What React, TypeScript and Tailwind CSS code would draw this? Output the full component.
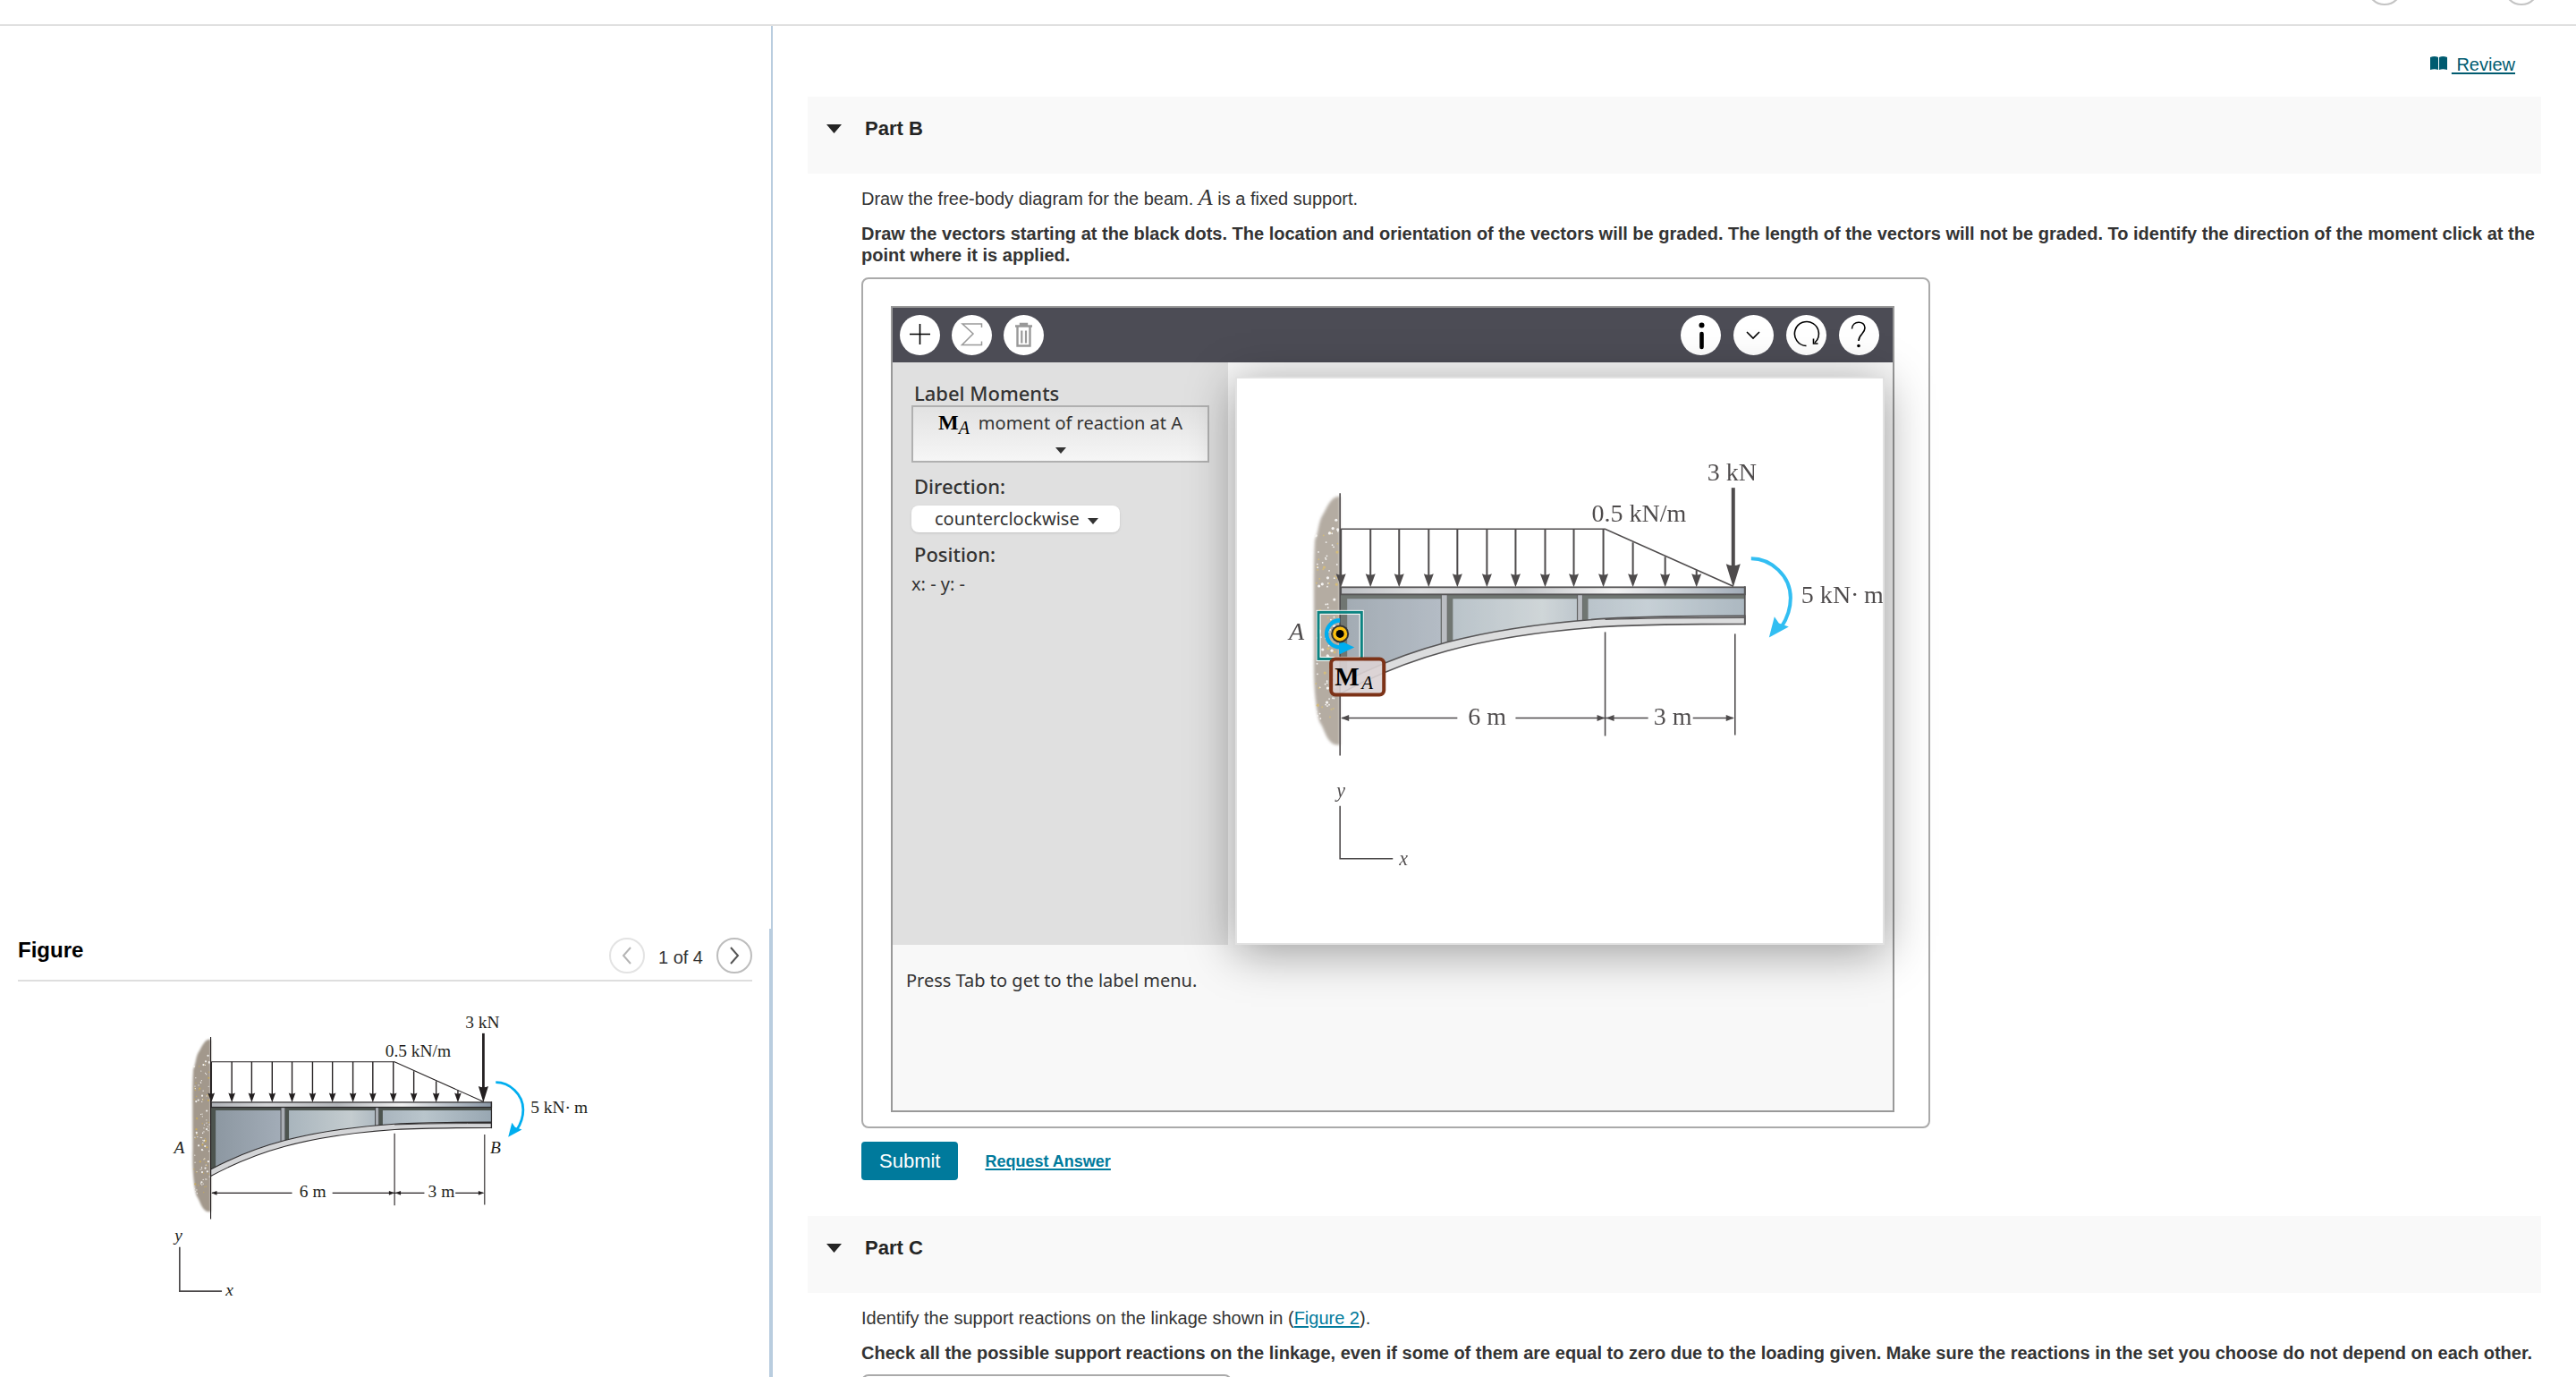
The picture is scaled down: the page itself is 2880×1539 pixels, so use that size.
import React, { useId } from "react";

const loadArrows = [1, 34, 66, 99, 131, 164, 196, 229, 261, 294].map((x) => ({ x, top: 40 }));
const taperArrows = [
  { x: 327, top: 55 },
  { x: 363, top: 71 },
  { x: 398, top: 86 },
];

const specks = Array.from({ length: 120 }, (_, i) => {
  const a = Math.abs(Math.sin(i * 12.9898) * 43758.5453) % 1;
  const b = Math.abs(Math.sin(i * 78.233 + 3) * 12543.123) % 1;
  return { x: -27 + a * 25, y: 28 + b * 226, r: i % 4 === 0 ? 1.6 : 0.9, yellow: i % 3 === 1 };
});

function Arrow({ x, top }: { x: number; top: number }) {
  return (
    <g>
      <line x1={x} y1={top} x2={x} y2={94} stroke="#231f20" strokeWidth="2" />
      <path d={`M${x - 5.5} 90 Q${x} 92.5 ${x + 5.5} 90 L${x} 105 Z`} fill="#231f20" />
    </g>
  );
}

function DimHead({ x, dir }: { x: number; dir: 1 | -1 }) {
  return <path d={`M${x} 251 l${-9 * dir} -3.5 v7 Z`} fill="#231f20" />;
}

function BeamDrawing() {
  const id = useId();
  const web = `${id}web`;
  const flange = `${id}flange`;
  const soft = `${id}soft`;
  return (
    <g>
      <defs>
        <linearGradient id={web} x1="0" y1="0" x2="452" y2="0" gradientUnits="userSpaceOnUse">
          <stop offset="0" stopColor="#8b96a0" />
          <stop offset="0.26" stopColor="#a3adb8" />
          <stop offset="0.28" stopColor="#a9b5bd" />
          <stop offset="0.5" stopColor="#c4cccf" />
          <stop offset="0.61" stopColor="#a9b5be" />
          <stop offset="0.76" stopColor="#b9c5cc" />
          <stop offset="1" stopColor="#98a7b2" />
        </linearGradient>
        <linearGradient id={flange} x1="0" y1="0" x2="452" y2="0" gradientUnits="userSpaceOnUse">
          <stop offset="0" stopColor="#b0b3b8" />
          <stop offset="0.2" stopColor="#d3d4d6" />
          <stop offset="0.45" stopColor="#b4b7bb" />
          <stop offset="0.68" stopColor="#f0f0f0" />
          <stop offset="1" stopColor="#8a97a6" />
        </linearGradient>
        <filter id={soft} x="-20%" y="-5%" width="140%" height="110%">
          <feGaussianBlur stdDeviation="1.6" />
        </filter>
      </defs>

      <path
        d="M0 4 C-8 2 -13 12 -18 22 C-25 32 -23 42 -28 52 C-30 80 -29 130 -29 180 C-30 215 -27 240 -23 255 C-18 262 -17 270 -12 276 C-7 282 -4 281 0 281 Z"
        fill="#a2988c"
        filter={`url(#${soft})`}
      />
      {specks.map((s, i) => (
        <circle key={i} cx={s.x} cy={s.y} r={s.r} fill={s.yellow ? "#c9ab5c" : "#f4f2ef"} />
      ))}

      <path d="M0 112 H452 V137 C400 137 350 137 296 140 C150 150 70 176 0 213 Z" fill={`url(#${web})`} />
      <path d="M0 112 H452 V118 H8 V209 L0 213 Z" fill="#4d544f" />
      <rect x="113" y="113" width="7" height="56" fill="#a9adb3" stroke="#3a3c3d" strokeWidth="1.2" />
      <path d="M120 113 H126 V164 L120 167 Z" fill="#4d544f" />
      <rect x="265" y="113" width="6" height="30" fill="#a9adb3" stroke="#3a3c3d" strokeWidth="1.2" />
      <path d="M271 113 H277 V142 H271 Z" fill="#4d544f" />
      <path
        d="M0 213 C70 176 150 150 296 140 C350 137 400 137 452 137 V146 C400 146 350 146 296 149 C150 159 70 186 0 224 Z"
        fill="#d4d5d7"
        stroke="#2d2b2c"
        strokeWidth="1.6"
      />
      <path d="M296 141 C350 139 400 139 452 139" fill="none" stroke="#2d2b2c" strokeWidth="1.2" />
      <rect x="1" y="105" width="451" height="8" fill={`url(#${flange})`} stroke="#2d2b2c" strokeWidth="1.8" />
      <line x1="452" y1="104" x2="452" y2="147" stroke="#2d2b2c" strokeWidth="1.8" />

      <line x1="0" y1="0" x2="0" y2="293" stroke="#231f20" strokeWidth="1.6" />
      <path d="M1 40 H296 L439 104" fill="none" stroke="#231f20" strokeWidth="1.6" />
      {[...loadArrows, ...taperArrows].map((a) => (
        <Arrow key={a.x} {...a} />
      ))}
      <line x1="439" y1="-6" x2="439" y2="86" stroke="#231f20" strokeWidth="4" />
      <path d="M431 79 Q439 83 447 79 L439 105 Z" fill="#231f20" />

      <path d="M459 73 C481 73 503 92 503 117 C503 130 499 140 493 149" fill="none" stroke="#00aeef" strokeWidth="4" />
      <path d="M479 161 L485 138 L490 145 L501 149 Z" fill="#00aeef" />

      <g stroke="#231f20" strokeWidth="1.6">
        <line x1="296" y1="155" x2="296" y2="271" />
        <line x1="441" y1="157" x2="441" y2="270" />
        <path d="M2 251 H131 M196 251 H344 M394 251 H439" />
      </g>
      <DimHead x={1} dir={-1} />
      <DimHead x={296} dir={1} />
      <DimHead x={297} dir={-1} />
      <DimHead x={440} dir={1} />

      <g fill="#231f20" fontSize="28">
        <text x="410" y="-14">3 kN</text>
        <text x="281" y="32">0.5 kN/m</text>
        <text x="515" y="123">{"5 kN·\u2009m"}</text>
        <text x="143" y="258">6 m</text>
        <text x="350" y="258">3 m</text>
      </g>
    </g>
  );
}

function FigureDrawing() {
  return (
    <svg
      viewBox="-80 -56 720 518"
      className="ml-[160px] h-[360px] w-[500px] font-['Liberation_Serif',serif]"
      role="img"
      aria-label="Cantilever beam with distributed load"
    >
      <BeamDrawing />
      <g fill="#231f20" fontSize="28" fontStyle="italic">
        <text x="-59" y="187">A</text>
        <text x="450" y="187">B</text>
        <text x="-58" y="328">y</text>
        <text x="24" y="416">x</text>
      </g>
      <path d="M-50 338 V409 H18" fill="none" stroke="#4a4748" strokeWidth="2.4" />
    </svg>
  );
}

function CanvasDrawing() {
  return (
    <svg
      viewBox="-115 -128 721 631"
      className="block h-auto w-full font-['Liberation_Serif',serif]"
      role="img"
      aria-label="Free-body diagram canvas"
    >
      <g opacity="0.8">
        <BeamDrawing />
        <g fill="#231f20" fontStyle="italic">
          <text x="-57" y="164" fontSize="28">A</text>
          <text x="-4" y="339" fontSize="22">y</text>
          <text x="66" y="415" fontSize="22">x</text>
        </g>
        <path d="M0 349 V408 H59" fill="none" stroke="#231f20" strokeWidth="1.6" />
      </g>

      <rect x="-26" y="131" width="52" height="56" fill="none" stroke="#ffffff" strokeWidth="1" />
      <rect x="-24" y="133" width="48" height="52" fill="none" stroke="#0b8482" strokeWidth="3" />
      <rect x="-22" y="135" width="44" height="48" fill="none" stroke="#ffffff" strokeWidth="1" />
      <path d="M0 142 A15 15 0 0 0 0 172" fill="none" stroke="#00aeef" strokeWidth="4.5" />
      <path d="M-1 164 V180 L16 172 Z" fill="#00aeef" />
      <circle cx="0" cy="157" r="10" fill="#333333" />
      <circle cx="0" cy="157" r="8" fill="#fdc010" />
      <circle cx="0" cy="157" r="4.5" fill="#000000" />

      <rect x="-10" y="185" width="59" height="40" rx="5" fill="#dcd3d4" fillOpacity="0.9" stroke="#7c3217" strokeWidth="4" />
      <text x="-6" y="215" fontSize="29" fontWeight="bold">M</text>
      <text x="24" y="219" fontSize="21" fontStyle="italic">A</text>
    </svg>
  );
}

function Caret() {
  return (
    <svg viewBox="0 0 12 7" className="h-[7px] w-3" fill="#333" aria-hidden="true">
      <path d="M0 0 H12 L6 7 Z" />
    </svg>
  );
}

function ToolButton({ label, children }: { label: string; children: React.ReactNode }) {
  return (
    <button aria-label={label} className="flex size-[45px] items-center justify-center rounded-full bg-white">
      <svg viewBox="0 0 45 45" className="size-full" fill="none" stroke="#000" strokeWidth="1.6">
        {children}
      </svg>
    </button>
  );
}

function Toolbar() {
  return (
    <div className="flex h-[61px] items-center justify-between bg-[#4c4c55] pr-[15px] pl-2">
      <div className="flex gap-[13px]">
        <ToolButton label="Add">
          <path d="M11 21.5 H34 M22.5 10 V33" />
        </ToolButton>
        <ToolButton label="Sum">
          <path d="M33.5 14 V10 H12 L24 21 L11.5 33.5 H33.5 V29.5" stroke="#999" strokeWidth="1.5" />
        </ToolButton>
        <ToolButton label="Delete">
          <path d="M13 12.5 H32 M19 11.5 V10 H26 V11.5" stroke="#999" strokeWidth="2.4" />
          <path d="M15.5 13 V34.5 H29.5 V13" stroke="#999" strokeWidth="2.4" />
          <path d="M20.3 17.5 V31.5 M25 17.5 V31.5" stroke="#999" strokeWidth="2.2" />
        </ToolButton>
      </div>
      <div className="flex gap-3.5">
        <ToolButton label="Information">
          <circle cx="23.5" cy="11.5" r="3" fill="#000" stroke="none" />
          <path d="M23.5 21 V36" strokeWidth="4.6" strokeLinecap="round" />
        </ToolButton>
        <ToolButton label="More">
          <path d="M15 19 L22 26 L29 19" />
        </ToolButton>
        <ToolButton label="Reset">
          <path d="M22.5 34.5 A13.5 13.5 0 1 1 32 31" />
          <path d="M30.5 26.5 V32 H35.5" />
        </ToolButton>
        <ToolButton label="Help">
          <path d="M14.5 15.5 C15 6 29 6 29 14.5 C29 21 22 21.5 22 29" />
          <circle cx="22" cy="34.5" r="1.8" fill="#000" stroke="none" />
        </ToolButton>
      </div>
    </div>
  );
}

function LabelPanel() {
  return (
    <div className="w-[375px] bg-[#e0e0e0] pt-5 pl-[21px] font-['Noto_Sans',sans-serif] text-xl leading-7 text-[#333]">
      <div className="pl-[3px] text-[22px] leading-7 font-medium" id="moment-label">Label Moments</div>
      <button
        aria-labelledby="moment-label"
        className="flex h-16 w-[333px] flex-col items-center justify-between border-2 border-[#b0b0b0] bg-linear-to-b from-[#e2e2e2] to-[#f6f6f6] pt-[3px] pb-2"
      >
        <span className="flex items-baseline gap-2.5 leading-7">
          <span className="font-['Liberation_Serif',serif] text-2xl leading-7 font-bold text-black">
            M<sub className="text-xl font-normal italic">A</sub>
          </span>
          moment of reaction at A
        </span>
        <Caret />
      </button>
      <label htmlFor="direction" className="mt-3 block pl-[3px] text-[22px] leading-7 font-medium">Direction:</label>
      <div className="relative mt-2 w-[233px]">
        <select
          id="direction"
          className="h-[30px] w-full appearance-none rounded-lg bg-white pl-[26px] shadow-sm"
        >
          <option>counterclockwise</option>
          <option>clockwise</option>
        </select>
        <span className="pointer-events-none absolute top-3.5 right-6">
          <Caret />
        </span>
      </div>
      <div className="mt-2.5 pl-[3px] text-[22px] leading-7 font-medium">Position:</div>
      <div className="mt-1.5">x: - y: -</div>
    </div>
  );
}

function DrawingApplet() {
  return (
    <div className="w-fit rounded-lg border-2 border-[#aaa] pt-[30px] pr-[38px] pb-4 pl-[31px]">
      <div className="h-[901px] w-[1122px] border-2 border-[#999] bg-[#f8f8f8]">
        <Toolbar />
        <div className="flex h-[651px]">
          <LabelPanel />
          <div className="mt-4 mr-[9px] ml-2 flex-1 border-2 border-[#e2e2e2] bg-white shadow-[0_8px_50px_rgba(0,0,0,0.38)]">
            <CanvasDrawing />
          </div>
        </div>
        <p className="pt-[26px] pl-[15px] font-['Noto_Sans',sans-serif] text-xl leading-7 text-[#333]">
          Press Tab to get to the label menu.
        </p>
      </div>
    </div>
  );
}

function PartHeader({ title }: { title: string }) {
  return (
    <button className="flex h-[86px] w-full items-start gap-[26px] bg-[#f9f9f9] pt-[22px] pl-[21px] text-left">
      <svg viewBox="0 0 17 10" className="mt-[9px] h-2.5 w-[17px]" fill="#252525" aria-hidden="true">
        <path d="M0 0 H17 L8.5 10 Z" />
      </svg>
      <span className="text-[22px] leading-7 font-bold text-[#252525]">{title}</span>
    </button>
  );
}

function NavButton({ label, d, muted }: { label: string; d: string; muted?: boolean }) {
  return (
    <button
      aria-label={label}
      className={`flex size-10 items-center justify-center rounded-full border-2 ${
        muted ? "border-[#e3e3e3]" : "border-[#bdbdbd]"
      }`}
    >
      <svg viewBox="0 0 12 20" className="h-5 w-3" fill="none" stroke={muted ? "#b5b5b5" : "#555"} strokeWidth="2">
        <path d={d} />
      </svg>
    </button>
  );
}

export default function App() {
  return (
    <div className="flex h-screen flex-col overflow-hidden bg-white font-['Liberation_Sans',Arial,sans-serif] text-xl leading-6 text-[#333]">
      <header className="flex h-[29px] shrink-0 items-end justify-end gap-[113px] overflow-hidden border-b-2 border-[#e0e0e0] pr-[41px] pb-[21px]">
        <button aria-label="Previous item" className="size-10 shrink-0 rounded-full border-2 border-[#c4c4c4]" />
        <button aria-label="Next item" className="size-10 shrink-0 rounded-full border-2 border-[#c4c4c4]" />
      </header>

      <div className="flex min-h-0 flex-1">
        <aside className="flex w-[30%] shrink-0 flex-col">
          <div className="flex-1 border-r-2 border-[#b9cddf]" />
          <section className="h-[501px] border-r-4 border-[#b9cddf] pr-[19px] pl-5">
            <div className="flex h-[59px] items-start justify-between border-b-2 border-[#dedede] pt-2.5">
              <h2 className="text-2xl leading-7 font-bold text-black">Figure</h2>
              <div className="flex items-center gap-[15px]">
                <NavButton label="Previous figure" d="M10 1 L2 10 L10 19" muted />
                <span className="pt-[3px]">1 of 4</span>
                <NavButton label="Next figure" d="M2 1 L10 10 L2 19" />
              </div>
            </div>
            <div className="pt-[23px]">
              <FigureDrawing />
            </div>
          </section>
        </aside>

        <main className="min-w-0 flex-1 overflow-hidden px-[39px]">
          <div className="flex h-[79px] justify-end pt-[31px] pr-[29px]">
            <a href="#review" className="flex items-start gap-[5px] text-[#005b70]">
              <svg viewBox="0 0 19 16" className="mt-[3px] h-4 w-[19px]" fill="currentColor" aria-hidden="true">
                <path d="M0 1 Q5 -1 9 1 V15 Q5 13.5 0 15 Z M10 1 Q14 -1 19 1 V15 Q14 13.5 10 15 Z" />
              </svg>
              <span className="whitespace-pre underline decoration-2 underline-offset-2"> Review</span>
            </a>
          </div>

          <PartHeader title="Part B" />
          <div className="pt-[15px] pl-[60px]">
            <p className="leading-6">
              Draw the free-body diagram for the beam.{" "}
              <i className="font-['Liberation_Serif',serif] text-[26px] leading-6">A</i> is a fixed support.
            </p>
            <p className="mt-[15px] font-bold">
              Draw the vectors starting at the black dots. The location and orientation of the vectors will be graded.
              The length of the vectors will not be graded. To identify the direction of the moment click at the point
              where it is applied.
            </p>
            <div className="mt-[13px]">
              <DrawingApplet />
            </div>
            <div className="mt-[15px] flex items-center gap-[30px]">
              <button className="h-[43px] rounded-sm bg-[#007a9c] px-5 text-[22px] leading-6 text-white">
                Submit
              </button>
              <a
                href="#request-answer"
                className="text-lg leading-6 font-bold text-[#007a9c] underline decoration-2 underline-offset-2"
              >
                Request Answer
              </a>
            </div>
          </div>

          <div className="mt-10">
            <PartHeader title="Part C" />
          </div>
          <div className="pt-4 pl-[60px]">
            <p>
              Identify the support reactions on the linkage shown in (
              <a href="#figure-2" className="text-[#007a9c] underline decoration-2 underline-offset-2">
                Figure 2
              </a>
              ).
            </p>
            <p className="mt-[15px] font-bold">
              Check all the possible support reactions on the linkage, even if some of them are equal to zero due to
              the loading given. Make sure the reactions in the set you choose do not depend on each other.
            </p>
            <div className="mt-3 h-40 w-[414px] rounded-lg border-2 border-[#aaa]" />
          </div>
        </main>
      </div>
    </div>
  );
}
